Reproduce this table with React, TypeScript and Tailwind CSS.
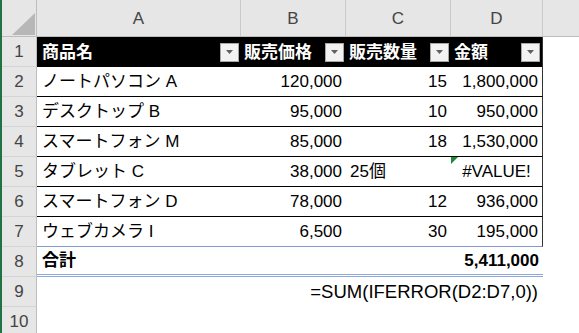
import React from 'react';

const rows = [
  { n: 2, name: 'ノートパソコン A', price: '120,000', qty: '15', amount: '1,800,000' },
  { n: 3, name: 'デスクトップ B', price: '95,000', qty: '10', amount: '950,000' },
  { n: 4, name: 'スマートフォン M', price: '85,000', qty: '18', amount: '1,530,000' },
  { n: 5, name: 'タブレット C', price: '38,000', qty: '25個', amount: '#VALUE!' },
  { n: 6, name: 'スマートフォン D', price: '78,000', qty: '12', amount: '936,000' },
  { n: 7, name: 'ウェブカメラ I', price: '6,500', qty: '30', amount: '195,000' },
];

function FilterButton() {
  return (
    <span className="ml-auto mr-[2px] flex h-[19px] w-[19px] shrink-0 items-center justify-center border border-[#a6a6a6] bg-[#f2f2f2]">
      <svg width="7" height="4" viewBox="0 0 7 4">
        <path d="M0 0h7L3.5 4z" fill="#606060" />
      </svg>
    </span>
  );
}

function RowHead({ n }: { n: number }) {
  return (
    <div className="flex items-center justify-center border-r border-b border-r-[#bdbdbd] border-b-[#d4d4d4] bg-[#e6e6e6] text-[#444]">
      {n}
    </div>
  );
}

export default function App() {
  return (
    <div className="h-[333px] w-[579px] overflow-hidden border-l-2 border-[#217346] bg-white font-['Liberation_Sans','Noto_Sans_CJK_JP',sans-serif] text-[17px] leading-none text-black">
      <div className="grid grid-cols-[35px_204px_105px_105px_92px_1fr] grid-rows-[37px_repeat(10,30px)]">
        {/* column headers */}
        <div className="relative border-r border-b border-[#bdbdbd] bg-[#e6e6e6]">
          <svg className="absolute left-[10px] top-[13px]" width="23" height="22" viewBox="0 0 23 22">
            <path d="M23 0V22H0z" fill="#b7b7b7" />
          </svg>
        </div>
        {['A', 'B', 'C', 'D'].map((c) => (
          <div key={c} className="flex items-center justify-center border-r border-b border-r-[#cacaca] border-b-[#bdbdbd] bg-[#e6e6e6] text-[#444]">
            {c}
          </div>
        ))}
        <div className="border-b border-[#bdbdbd] bg-[#e6e6e6]" />

        {/* row 1: table header */}
        <RowHead n={1} />
        <div className="flex items-center bg-black pl-[5px] font-bold text-white">
          商品名
          <FilterButton />
        </div>
        <div className="flex items-center bg-black pl-[3px] font-bold text-white">
          販売価格
          <FilterButton />
        </div>
        <div className="flex items-center bg-black pl-[3px] font-bold text-white">
          販売数量
          <FilterButton />
        </div>
        <div className="flex items-center border-r border-[#333] bg-black pl-[3px] font-bold text-white">
          金額
          <FilterButton />
        </div>
        <div />

        {/* data rows */}
        {rows.map((r) => {
          const last = r.n === 7;
          const line = last ? 'border-b border-[#7f9bd0]' : 'border-b border-black';
          const isText = r.qty.endsWith('個');
          const isError = r.amount.startsWith('#');
          return (
            <React.Fragment key={r.n}>
              <RowHead n={r.n} />
              <div className={`flex items-center pl-[5px] ${line}`}>{r.name}</div>
              <div className={`flex items-center justify-end pr-[4px] ${line}`}>{r.price}</div>
              <div className={`flex items-center pr-[4px] ${isText ? 'pl-[4px]' : 'justify-end'} ${line}`}>{r.qty}</div>
              <div className={`relative flex items-center border-r border-r-[#333] ${line} ${isError ? 'justify-center' : 'justify-end pr-[4px]'}`}>
                {isError && (
                  <svg className="absolute left-0 top-0" width="7" height="7" viewBox="0 0 7 7">
                    <path d="M0 0h7L0 7z" fill="#1b8a3a" />
                  </svg>
                )}
                {r.amount}
              </div>
              <div />
            </React.Fragment>
          );
        })}

        {/* row 8: total */}
        <RowHead n={8} />
        <div className="flex items-center border-b-[3px] border-double border-[#8eaadb] pl-[5px] font-bold">合計</div>
        <div className="border-b-[3px] border-double border-[#8eaadb]" />
        <div className="border-b-[3px] border-double border-[#8eaadb]" />
        <div className="flex items-center justify-end border-b-[3px] border-double border-[#8eaadb] pr-[4px] font-bold">
          5,411,000
        </div>
        <div />

        {/* row 9: formula */}
        <RowHead n={9} />
        <div className="col-span-4 flex items-center justify-end pr-[5px] text-[18.5px]">
          =SUM(IFERROR(D2:D7,0))
        </div>
        <div />

        <RowHead n={10} />
        <div className="col-span-5" />
      </div>
    </div>
  );
}
